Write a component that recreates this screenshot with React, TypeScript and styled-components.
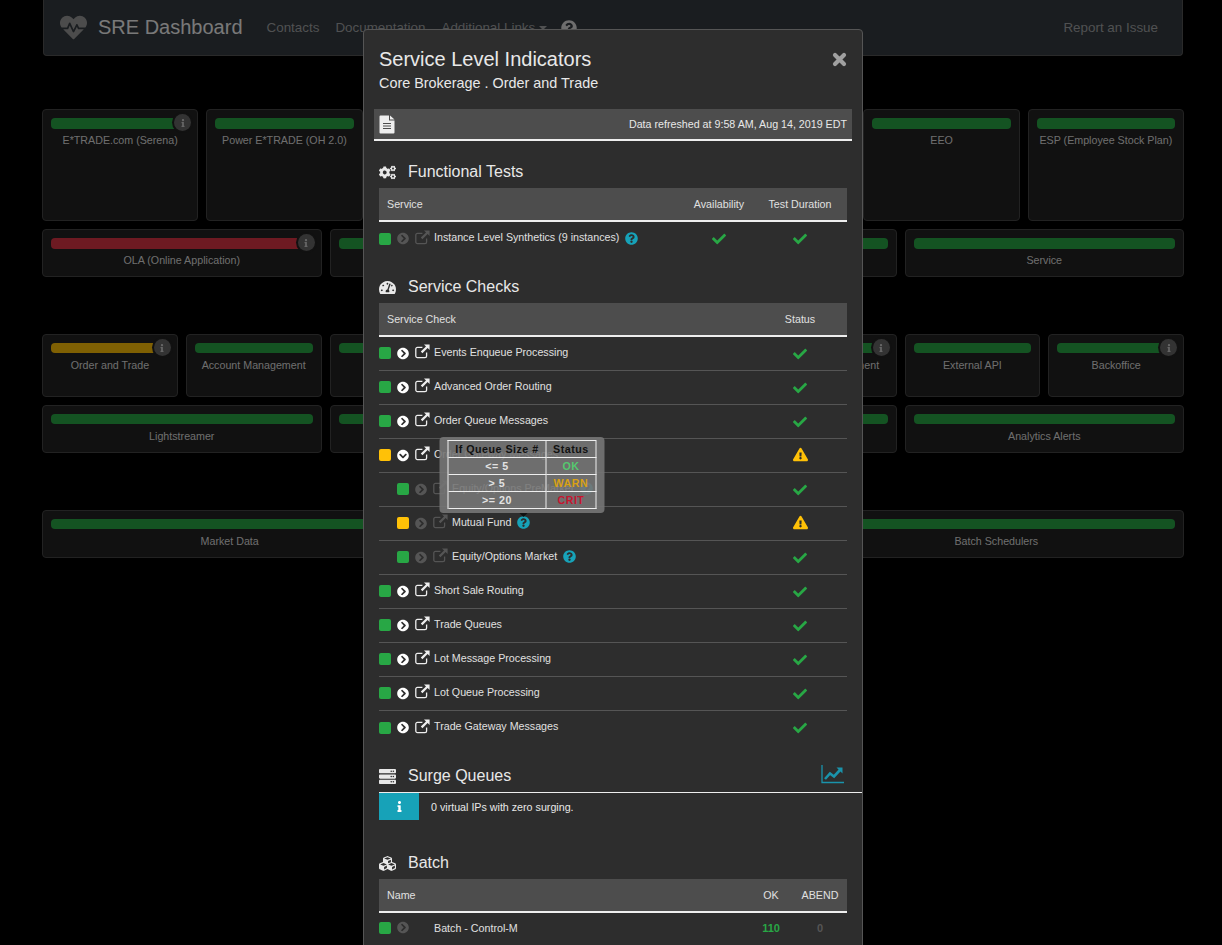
import React from 'react';
import styled, { createGlobalStyle } from 'styled-components';
import {
  FaCheck,
  FaChevronCircleDown,
  FaChevronCircleRight,
  FaCogs,
  FaCubes,
  FaExclamationTriangle,
  FaHeartbeat,
  FaInfo,
  FaQuestionCircle,
  FaServer,
  FaTachometerAlt,
} from 'react-icons/fa';

const GREEN = '#28a745';
const YELLOW = '#ffc107';
const RED = '#dc3545';
const TEAL = '#17a2b8';

type Tile = { name?: string; color?: string; info?: boolean };

const rows: { cols: number; height: number; bar: number; gap: number; tiles: Tile[] }[] = [
  {
    cols: 7, height: 112, bar: 11, gap: 0,
    tiles: [{ name: 'E*TRADE.com (Serena)', info: true }, { name: 'Power E*TRADE (OH 2.0)' }, {}, {}, {}, { name: 'EEO' }, { name: 'ESP (Employee Stock Plan)' }],
  },
  {
    cols: 4, height: 48, bar: 11, gap: 8,
    tiles: [{ name: 'OLA (Online Application)', color: RED, info: true }, {}, {}, { name: 'Service' }],
  },
  {
    cols: 8, height: 63, bar: 10, gap: 57,
    tiles: [
      { name: 'Order and Trade', color: YELLOW, info: true }, { name: 'Account Management' }, {}, {}, {},
      { name: 'Advisor Management', info: true }, { name: 'External API' }, { name: 'Backoffice', info: true },
    ],
  },
  {
    cols: 4, height: 48, bar: 10, gap: 8,
    tiles: [{ name: 'Lightstreamer' }, {}, {}, { name: 'Analytics Alerts' }],
  },
  {
    cols: 3, height: 48, bar: 10, gap: 57,
    tiles: [{ name: 'Market Data' }, {}, { name: 'Batch Schedulers' }],
  },
];

type Check = { name: string; color?: string; sub?: boolean; open?: boolean; dim?: boolean; help?: boolean; tip?: boolean; warn?: boolean };

const checks: Check[] = [
  { name: 'Events Enqueue Processing' },
  { name: 'Advanced Order Routing' },
  { name: 'Order Queue Messages' },
  { name: 'Order Gateway Messages', color: YELLOW, open: true, warn: true },
  { name: 'Equity/Options PreMarket', sub: true, dim: true, help: true },
  { name: 'Mutual Fund', color: YELLOW, sub: true, dim: true, help: true, tip: true, warn: true },
  { name: 'Equity/Options Market', sub: true, dim: true, help: true },
  { name: 'Short Sale Routing' },
  { name: 'Trade Queues' },
  { name: 'Lot Message Processing' },
  { name: 'Lot Queue Processing' },
  { name: 'Trade Gateway Messages' },
];

const GlobalStyle = createGlobalStyle`
  html, body {
    margin: 0;
    height: 100%;
    overflow: hidden;
    background: #000;
    font-family: "Liberation Sans", Arial, sans-serif;
  }
`;

const Page = styled.div`
  padding: 0 38px 0 42px;
`;

const Navbar = styled.nav`
  box-sizing: border-box;
  height: 56px;
  margin: 0 1px 53px;
  padding: 0 24px 0 16px;
  display: flex;
  align-items: center;
  background: #343a40;
  border: 1px solid #555;
  border-top: 0;
  border-radius: 0 0 4px 4px;
`;

const Brand = styled.div`
  display: flex;
  align-items: center;
  gap: 11px;
  margin-right: 24px;
  font-size: 20px;
  color: #f2f2f2;
  svg { font-size: 27px; color: #999; }
`;

const NavLink = styled.a<{ $push?: boolean }>`
  font-size: 13.4px;
  color: #a0a2a4;
  margin-right: 16px;
  margin-left: ${({ $push }) => ($push ? 'auto' : '0')};
  white-space: nowrap;
  &:last-child { margin-right: 0; }
`;

const Caret = styled.span`
  display: inline-block;
  margin-left: 4px;
  vertical-align: 2px;
  border-top: 4px solid #a0a2a4;
  border-left: 4px solid transparent;
  border-right: 4px solid transparent;
`;

const NavHelp = styled.span`
  display: flex;
  margin-left: -2px;
  font-size: 16px;
  color: #ddd;
`;

const TileRow = styled.div<{ $cols: number; $gap: number }>`
  display: grid;
  grid-template-columns: repeat(${({ $cols }) => $cols}, 1fr);
  gap: 8px;
  margin-top: ${({ $gap }) => $gap}px;
`;

const TileCard = styled.div<{ $height: number }>`
  position: relative;
  box-sizing: border-box;
  height: ${({ $height }) => $height}px;
  padding: 8px;
  background: #222;
  border: 1px solid #444;
  border-radius: 4px;
`;

const StatusBar = styled.div<{ $color: string; $height: number }>`
  height: ${({ $height }) => $height}px;
  margin-bottom: ${({ $height }) => 16 - $height}px;
  background: ${({ $color }) => $color};
  border-radius: 4px;
`;

const TileName = styled.div`
  font-size: 10.7px;
  line-height: 12px;
  text-align: center;
  white-space: nowrap;
  color: #ddd;
`;

const InfoBadge = styled.span`
  position: absolute;
  top: 4px;
  right: 6px;
  width: 17px;
  height: 17px;
  display: flex;
  align-items: center;
  justify-content: center;
  font-size: 8px;
  color: #ccc;
  background: #666;
  border-radius: 50%;
  box-shadow: 0 0 0 2px #222;
`;

const Backdrop = styled.div`
  position: fixed;
  inset: 0;
  background: rgba(0, 0, 0, 0.5);
`;

const Modal = styled.div`
  position: absolute;
  top: 29px;
  left: 363px;
  box-sizing: border-box;
  width: 500px;
  height: 1100px;
  padding: 17px 15px 0;
  background: #2d2d2d;
  border: 1px solid #555;
  border-radius: 4px;
  color: #e0e0e0;
`;

const ModalHeader = styled.header`
  display: flex;
  justify-content: space-between;
`;

const ModalTitle = styled.h1`
  margin: 0;
  font-size: 20px;
  font-weight: 400;
  line-height: 24px;
  color: #e8e8e8;
`;

const ModalSubtitle = styled.div`
  margin-top: 2px;
  font-size: 14.4px;
  line-height: 20px;
  color: #e8e8e8;
`;

const CloseIcon = styled.svg`
  display: block;
  flex: none;
  width: 15px;
  height: 15px;
  margin: 5px 0 0;
`;

const RefreshBar = styled.div`
  box-sizing: border-box;
  height: 32px;
  margin: 16px -5px 0;
  padding: 0 5px;
  display: flex;
  align-items: center;
  justify-content: space-between;
  font-size: 10.7px;
  color: #e8e8e8;
  background: #4d4d4d;
  border-bottom: 2px solid #eee;
`;

const FileIcon = styled.svg`
  display: block;
  width: 16px;
  height: 19px;
  margin-top: 1px;
`;

const SectionTitle = styled.h2<{ $top: number; $below?: number; $flush?: boolean }>`
  box-sizing: border-box;
  margin: ${({ $top }) => $top}px 0 ${({ $below }) => $below ?? 6}px;
  height: 22px;
  padding-top: ${({ $flush }) => ($flush ? '0' : '2px')};
  display: flex;
  align-items: center;
  font-size: 16px;
  font-weight: 400;
  color: #e8e8e8;
`;

const SectionIcon = styled.span`
  flex: none;
  width: 17px;
  margin-right: 12px;
  display: flex;
  justify-content: center;
  font-size: 17px;
  color: #e8e8e8;
`;

const TrendIcon = styled.svg`
  display: block;
  width: 23px;
  height: 19px;
  margin-left: auto;
  margin-right: 3px;
  margin-top: -3px;
`;

const HeadRow = styled.div<{ $cols: string }>`
  box-sizing: border-box;
  height: 34px;
  padding-left: 8px;
  display: grid;
  grid-template-columns: ${({ $cols }) => $cols};
  align-items: center;
  font-size: 10.7px;
  color: #e0e0e0;
  background: #4d4d4d;
  border-bottom: 2px solid #eee;
`;

const BodyRow = styled.div<{ $cols: string; $last?: boolean; $lift?: number }>`
  box-sizing: border-box;
  height: 34px;
  padding-bottom: ${({ $lift }) => $lift ?? 1}px;
  display: grid;
  grid-template-columns: ${({ $cols }) => $cols};
  align-items: center;
  font-size: 10.7px;
  color: #e0e0e0;
  border-bottom: ${({ $last }) => ($last ? '0' : '1px solid #555')};
`;

const Center = styled.div`
  display: flex;
  justify-content: center;
  text-align: center;
`;

const NameCell = styled.div<{ $sub?: boolean }>`
  display: flex;
  align-items: center;
  padding-left: ${({ $sub }) => ($sub ? '18px' : '0')};
`;

const NameText = styled.span`
  margin-bottom: 3px;
  white-space: nowrap;
`;

const Square = styled.span<{ $color: string }>`
  flex: none;
  width: 12px;
  height: 12px;
  margin-right: 6px;
  background: ${({ $color }) => $color};
  border-radius: 2px;
`;

const Chevron = styled.span<{ $dim?: boolean }>`
  flex: none;
  display: flex;
  width: 12px;
  margin-right: 6px;
  font-size: 13px;
  color: ${({ $dim }) => ($dim ? '#555' : '#fff')};
`;

const LinkOutIcon = styled.svg<{ $dim?: boolean }>`
  display: block;
  flex: none;
  width: 15px;
  height: 15px;
  margin: -3px 4px 0 0;
  color: ${({ $dim }) => ($dim ? '#555' : '#eee')};
`;

const Spacer = styled.span`
  flex: none;
  width: 19px;
`;

const HelpWrap = styled.span`
  position: relative;
  display: flex;
  margin: -1px 0 0 6px;
  font-size: 13px;
  color: ${TEAL};
`;

const CheckIcon = styled.span`
  display: flex;
  margin-top: 1px;
  font-size: 14px;
  color: ${GREEN};
`;

const WarnIcon = styled.span`
  display: flex;
  margin-bottom: 1px;
  font-size: 15px;
  color: ${YELLOW};
`;

const Tip = styled.div`
  position: absolute;
  left: calc(50% - 2px);
  bottom: calc(100% + 3px);
  transform: translateX(-50%);
  box-sizing: border-box;
  width: 165px;
  padding: 3px 8px 4px;
  background: rgba(118, 118, 118, 0.9);
  border-radius: 4px;
  &::after {
    content: '';
    position: absolute;
    left: calc(50% + 2px);
    bottom: -4px;
    margin-left: -4px;
    border-top: 4px solid #111;
    border-left: 4px solid transparent;
    border-right: 4px solid transparent;
  }
`;

const TipGrid = styled.div`
  display: grid;
  grid-template-columns: 98px 1fr;
  border-top: 1px solid #eee;
  border-left: 1px solid #eee;
`;

const TipCell = styled.div<{ $color: string }>`
  height: 17px;
  line-height: 16px;
  box-sizing: border-box;
  text-align: center;
  font-size: 10.7px;
  font-weight: 700;
  letter-spacing: 0.5px;
  white-space: nowrap;
  color: ${({ $color }) => $color};
  border-right: 1px solid #eee;
  border-bottom: 1px solid #eee;
`;

const Callout = styled.div`
  height: 27px;
  display: flex;
  align-items: center;
  gap: 12px;
  font-size: 10.7px;
  color: #e8e8e8;
`;

const SurgeRule = styled.div`
  margin-right: -15px;
  border-top: 1px solid #eee;
`;

const CalloutIcon = styled.span`
  width: 40px;
  height: 27px;
  display: flex;
  align-items: center;
  justify-content: center;
  font-size: 11px;
  color: #fff;
  background: ${TEAL};
`;

const OkCount = styled.span`
  font-weight: 700;
  font-size: 11px;
  color: ${GREEN};
`;

const ZeroCount = styled.span`
  font-weight: 700;
  font-size: 11px;
  color: #555;
`;

const TESTS_COLS = '1fr 68px 94px';
const CHECK_COLS = '1fr 94px';
const BATCH_COLS = '1fr 44px 54px';

const tipRows = [
  ['If Queue Size #', 'Status', '#111', '#111'],
  ['<= 5', 'OK', '#e2e2e2', '#55c96e'],
  ['> 5', 'WARN', '#e2e2e2', '#d9a114'],
  ['>= 20', 'CRIT', '#e2e2e2', '#c8142e'],
];

const LinkOut = ({ dim }: { dim?: boolean }) => (
  <LinkOutIcon $dim={dim} viewBox="0 0 15 15">
    <path
      d="M11.6 8.6v3.4a1.6 1.6 0 0 1-1.6 1.6H2.4A1.6 1.6 0 0 1 .8 12V5a1.6 1.6 0 0 1 1.6-1.6H7.4"
      fill="none"
      stroke="currentColor"
      strokeWidth="1.3"
    />
    <path d="M9 .4h5.6V6l-2-2-5.2 5.2-1.6-1.6 5.2-5.2z" fill="currentColor" />
  </LinkOutIcon>
);

const QueueTip = () => (
  <Tip>
    <TipGrid>
      {tipRows.map(([left, right, leftColor, rightColor]) => (
        <React.Fragment key={left}>
          <TipCell $color={leftColor}>{left}</TipCell>
          <TipCell $color={rightColor}>{right}</TipCell>
        </React.Fragment>
      ))}
    </TipGrid>
  </Tip>
);

const CheckRow = ({ check, last }: { check: Check; last: boolean }) => (
  <BodyRow $cols={CHECK_COLS} $last={last}>
    <NameCell $sub={check.sub}>
      <Square $color={check.color ?? GREEN} />
      <Chevron $dim={check.dim}>{check.open ? <FaChevronCircleDown /> : <FaChevronCircleRight />}</Chevron>
      <LinkOut dim={check.dim} />
      <NameText>{check.name}</NameText>
      {check.help && (
        <HelpWrap>
          <FaQuestionCircle />
          {check.tip && <QueueTip />}
        </HelpWrap>
      )}
    </NameCell>
    <Center>
      {check.warn ? <WarnIcon><FaExclamationTriangle /></WarnIcon> : <CheckIcon><FaCheck /></CheckIcon>}
    </Center>
  </BodyRow>
);

export default function App() {
  return (
    <>
      <GlobalStyle />
      <Page>
        <Navbar>
          <Brand><FaHeartbeat />SRE Dashboard</Brand>
          <NavLink>Contacts</NavLink>
          <NavLink>Documentation</NavLink>
          <NavLink>Additional Links<Caret /></NavLink>
          <NavHelp><FaQuestionCircle /></NavHelp>
          <NavLink $push>Report an Issue</NavLink>
        </Navbar>
        {rows.map((row, r) => (
          <TileRow key={r} $cols={row.cols} $gap={row.gap}>
            {row.tiles.map((tile, t) => (
              <TileCard key={t} $height={row.height}>
                <StatusBar $color={tile.color ?? GREEN} $height={row.bar} />
                <TileName>{tile.name}</TileName>
                {tile.info && <InfoBadge><FaInfo /></InfoBadge>}
              </TileCard>
            ))}
          </TileRow>
        ))}
      </Page>
      <Backdrop />
      <Modal>
        <ModalHeader>
          <div>
            <ModalTitle>Service Level Indicators</ModalTitle>
            <ModalSubtitle>Core Brokerage . Order and Trade</ModalSubtitle>
          </div>
          <CloseIcon viewBox="0 0 15 15">
            <path d="M3 3l9 9M12 3l-9 9" stroke="#a0a0a0" strokeWidth="4.2" strokeLinecap="round" />
          </CloseIcon>
        </ModalHeader>
        <RefreshBar>
          <FileIcon viewBox="0 0 16 19">
            <path
              d="M1.5.5H10v5h5.5v12a1 1 0 0 1-1 1h-13a1 1 0 0 1-1-1V1.500a1 1 0 0 1 1-1zM11 .5l4.500 4H11z"
              fill="#eee"
            />
            <path d="M4 8.500h8M4 11h8M4 13.500h8" stroke="#4d4d4d" strokeWidth="1.200" />
          </FileIcon>
          <span>Data refreshed at 9:58 AM, Aug 14, 2019 EDT</span>
        </RefreshBar>

        <SectionTitle $top={19}><SectionIcon><FaCogs /></SectionIcon>Functional Tests</SectionTitle>
        <HeadRow $cols={TESTS_COLS}>
          <div>Service</div>
          <Center>Availability</Center>
          <Center>Test Duration</Center>
        </HeadRow>
        <BodyRow $cols={TESTS_COLS} $last>
          <NameCell>
            <Square $color={GREEN} />
            <Chevron $dim><FaChevronCircleRight /></Chevron>
            <LinkOut dim />
            <NameText>Instance Level Synthetics (9 instances)</NameText>
            <HelpWrap><FaQuestionCircle /></HelpWrap>
          </NameCell>
          <Center><CheckIcon><FaCheck /></CheckIcon></Center>
          <Center><CheckIcon><FaCheck /></CheckIcon></Center>
        </BodyRow>

        <SectionTitle $top={19}><SectionIcon><FaTachometerAlt /></SectionIcon>Service Checks</SectionTitle>
        <HeadRow $cols={CHECK_COLS}>
          <div>Service Check</div>
          <Center>Status</Center>
        </HeadRow>
        {checks.map((check, i) => (
          <CheckRow key={check.name} check={check} last={i === checks.length - 1} />
        ))}

        <SectionTitle $top={20} $below={5} $flush>
          <SectionIcon><FaServer /></SectionIcon>Surge Queues
          <TrendIcon viewBox="0 0 23 19">
            <path d="M1 0v17.500h22" fill="none" stroke="#1a93ab" strokeWidth="1.300" />
            <path d="M4 14l5-5.500 4 3 6-6.500" fill="none" stroke="#1a93ab" strokeWidth="2.600" />
            <path d="M15.500 2.500h6v6z" fill="#1a93ab" />
          </TrendIcon>
        </SectionTitle>
        <SurgeRule />
        <Callout>
          <CalloutIcon><FaInfo /></CalloutIcon>
          0 virtual IPs with zero surging.
        </Callout>

        <SectionTitle $top={31}><SectionIcon><FaCubes /></SectionIcon>Batch</SectionTitle>
        <HeadRow $cols={BATCH_COLS}>
          <div>Name</div>
          <Center>OK</Center>
          <Center>ABEND</Center>
        </HeadRow>
        <BodyRow $cols={BATCH_COLS} $lift={4}>
          <NameCell>
            <Square $color={GREEN} />
            <Chevron $dim><FaChevronCircleRight /></Chevron>
            <Spacer />
            Batch - Control-M
          </NameCell>
          <Center><OkCount>110</OkCount></Center>
          <Center><ZeroCount>0</ZeroCount></Center>
        </BodyRow>
      </Modal>
    </>
  );
}
